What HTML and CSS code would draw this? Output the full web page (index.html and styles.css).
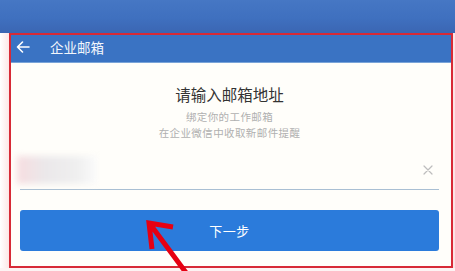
FILE: index.html
```html
<!DOCTYPE html>
<html lang="zh">
<head>
<meta charset="utf-8">
<link rel="stylesheet" href="styles.css">
</head>
<body>
<div class="page">
  <div class="topband"></div>
  <div class="row">
    <div class="side"></div>
    <div class="frame">
      <div class="header">
        <svg class="back" viewBox="0 0 14 12" width="14" height="12"><path d="M13 6H1.5M6.5 1L1.5 6l5 5" fill="none" stroke="#fff" stroke-width="1.6" stroke-linecap="round" stroke-linejoin="round"/></svg>
        <span class="htitle">企业邮箱</span>
      </div>
      <div class="content">
        <div class="title">请输入邮箱地址</div>
        <div class="sub">绑定你的工作邮箱</div>
        <div class="sub">在企业微信中收取新邮件提醒</div>
        <div class="input">
          <div class="blur"></div>
          <svg class="clear" viewBox="0 0 10 10" width="10" height="10"><path d="M1 1L9 9M9 1L1 9" stroke="#bdbdbd" stroke-width="1.2" stroke-linecap="round"/></svg>
        </div>
        <div class="button">下一步</div>
      </div>
    </div>
    <div class="rside"></div>
  </div>
  <svg class="arrow" viewBox="0 0 455 271" width="455" height="271"><path d="M187 274L150 224M173 227L149 223L152 249" fill="none" stroke="#e60012" stroke-width="5" stroke-linejoin="miter"/></svg>
</div>
</body>
</html>
```
FILE: styles.css
```css
html, body { margin: 0; padding: 0; }
body { width: 455px; height: 271px; overflow: hidden; background: #fdf3f3; font-family: "Noto Sans CJK SC", "Noto Sans", sans-serif; }
.page { position: relative; width: 455px; height: 271px; display: flex; flex-direction: column; }
.topband { height: 33px; background: linear-gradient(180deg, #4677c4 0%, #3f70bf 55%, #3b66b3 100%); filter: blur(0.5px); }
.row { display: flex; height: 235px; }
.side { width: 9px; background: linear-gradient(90deg, #fff 0%, #fde6e6 100%); }
.rside { flex: 1; background: #fbe5e5; }
.frame { width: 440px; border: 2px solid #d72a36; background: #fffefa; display: flex; flex-direction: column; }
.header { background: #3a73c3; border-bottom: 1px solid #7aa4d8; display: flex; align-items: center; padding: 0 0 3px 5px; box-sizing: border-box; height: 28px; }
.back { margin-right: 20px; }
.htitle { color: #f2f6fc; font-size: 13.5px; line-height: 16px; }
.content { flex: 1; display: flex; flex-direction: column; align-items: stretch; padding: 21px 12px 0 9px; }
.title { text-align: center; font-size: 15.5px; line-height: 20px; color: #333; margin-bottom: 5px; }
.sub { text-align: center; font-size: 10.5px; line-height: 16px; color: #b0b0b0; letter-spacing: 0.4px; }
.input { margin-top: 10px; height: 38px; border-bottom: 1px solid #a9bfd3; display: flex; align-items: center; justify-content: space-between; position: relative; }
.blur { width: 80px; height: 28px; margin-left: -3px; background: linear-gradient(90deg, #f7dde0 0%, #ebe8ea 35%, #efefef 75%, #fbfbfb 100%); filter: blur(3px); }
.clear { margin-right: 6px; }
.button { margin-top: 20px; height: 41px; border-radius: 3px; background: #2b7bdb; color: #fff; font-size: 13px; display: flex; align-items: center; justify-content: center; letter-spacing: 0.5px; }
.arrow { position: absolute; left: 0; top: 0; }
```
